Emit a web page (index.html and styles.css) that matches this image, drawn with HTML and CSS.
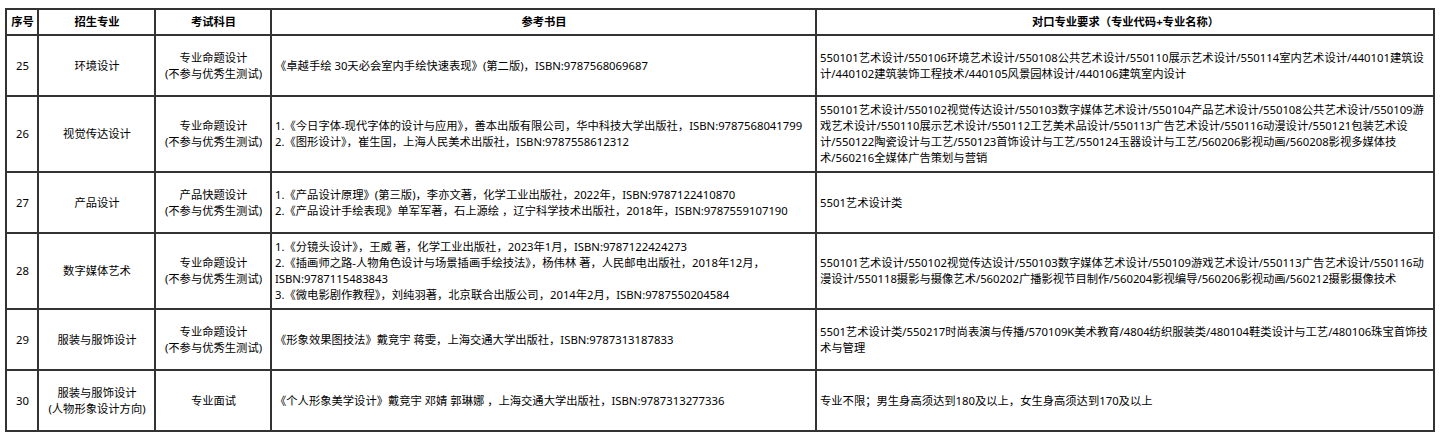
FILE: index.html
```html
<!DOCTYPE html>
<html lang="zh-CN">
<head>
<meta charset="utf-8">
<title>招生专业考试科目与参考书目</title>
<link rel="stylesheet" href="styles.css">
</head>
<body>
<div class="page">
<table class="plan">
  <colgroup>
    <col class="c-no">
    <col class="c-major">
    <col class="c-exam">
    <col class="c-book">
    <col class="c-req">
  </colgroup>
  <thead>
    <tr>
      <th>序号</th>
      <th>招生专业</th>
      <th>考试科目</th>
      <th>参考书目</th>
      <th>对口专业要求（专业代码+专业名称）</th>
    </tr>
  </thead>
  <tbody>
    <tr>
      <td class="center">25</td>
      <td class="center">环境设计</td>
      <td class="center">专业命题设计<br>(不参与优秀生测试)</td>
      <td>《卓越手绘 30天必会室内手绘快速表现》(第二版)，ISBN:9787568069687</td>
      <td>550101艺术设计/550106环境艺术设计/550108公共艺术设计/550110展示艺术设计/550114室内艺术设计/440101建筑设计/440102建筑装饰工程技术/440105风景园林设计/440106建筑室内设计</td>
    </tr>
    <tr>
      <td class="center">26</td>
      <td class="center">视觉传达设计</td>
      <td class="center">专业命题设计<br>(不参与优秀生测试)</td>
      <td>1.《今日字体-现代字体的设计与应用》，善本出版有限公司，华中科技大学出版社，ISBN:9787568041799<br>2.《图形设计》，崔生国，上海人民美术出版社，ISBN:9787558612312</td>
      <td>550101艺术设计/550102视觉传达设计/550103数字媒体艺术设计/550104产品艺术设计/550108公共艺术设计/550109游戏艺术设计/550110展示艺术设计/550112工艺美术品设计/550113广告艺术设计/550116动漫设计/550121包装艺术设计/550122陶瓷设计与工艺/550123首饰设计与工艺/550124玉器设计与工艺/560206影视动画/560208影视多媒体技术/560216全媒体广告策划与营销</td>
    </tr>
    <tr>
      <td class="center">27</td>
      <td class="center">产品设计</td>
      <td class="center">产品快题设计<br>(不参与优秀生测试)</td>
      <td>1.《产品设计原理》(第三版)，李亦文著，化学工业出版社，2022年，ISBN:9787122410870<br>2.《产品设计手绘表现》单军军著，石上源绘 ，辽宁科学技术出版社，2018年，ISBN:9787559107190</td>
      <td>5501艺术设计类</td>
    </tr>
    <tr>
      <td class="center">28</td>
      <td class="center">数字媒体艺术</td>
      <td class="center">专业命题设计<br>(不参与优秀生测试)</td>
      <td>1.《分镜头设计》，王威 著，化学工业出版社，2023年1月，ISBN:9787122424273<br>2.《插画师之路-人物角色设计与场景插画手绘技法》，杨伟林 著，人民邮电出版社，2018年12月，ISBN:9787115483843<br>3.《微电影剧作教程》，刘纯羽著，北京联合出版公司，2014年2月，ISBN:9787550204584</td>
      <td>550101艺术设计/550102视觉传达设计/550103数字媒体艺术设计/550109游戏艺术设计/550113广告艺术设计/550116动漫设计/550118摄影与摄像艺术/560202广播影视节目制作/560204影视编导/560206影视动画/560212摄影摄像技术</td>
    </tr>
    <tr>
      <td class="center">29</td>
      <td class="center">服装与服饰设计</td>
      <td class="center">专业命题设计<br>(不参与优秀生测试)</td>
      <td>《形象效果图技法》戴竞宇 蒋雯，上海交通大学出版社，ISBN:9787313187833</td>
      <td>5501艺术设计类/550217时尚表演与传播/570109K美术教育/4804纺织服装类/480104鞋类设计与工艺/480106珠宝首饰技术与管理</td>
    </tr>
    <tr>
      <td class="center">30</td>
      <td class="center">服装与服饰设计<br>(人物形象设计方向)</td>
      <td class="center">专业面试</td>
      <td>《个人形象美学设计》戴竞宇 邓婧 郭琳娜 ，上海交通大学出版社，ISBN:9787313277336</td>
      <td>专业不限；男生身高须达到180及以上，女生身高须达到170及以上</td>
    </tr>
  </tbody>
</table>
</div>
</body>
</html>
```

FILE: styles.css
```css
html, body {
  margin: 0;
  padding: 0;
  background: #ffffff;
}

.page {
  padding: 8px 0 0 5px;
}

.plan {
  border-collapse: collapse;
  table-layout: fixed;
  width: 1430px;
  font-family: "Noto Sans", "Noto Sans CJK SC", sans-serif;
  font-size: 11.3px;
  line-height: 16px;
  color: #000000;
}

.c-no { width: 32px; }
.c-major { width: 117px; }
.c-exam { width: 116px; }
.c-book { width: 545px; }
.c-req { width: 618px; }

.plan th,
.plan td {
  border: 2px solid #333333;
  padding: 5px 2px 5px 3px;
  vertical-align: middle;
  text-align: left;
}

.plan th {
  height: 13px;
  padding-top: 4px;
  padding-bottom: 4px;
  font-weight: bold;
  text-align: center;
}

.plan tbody tr {
  height: 61px;
}

.plan td.center {
  text-align: center;
}
```
